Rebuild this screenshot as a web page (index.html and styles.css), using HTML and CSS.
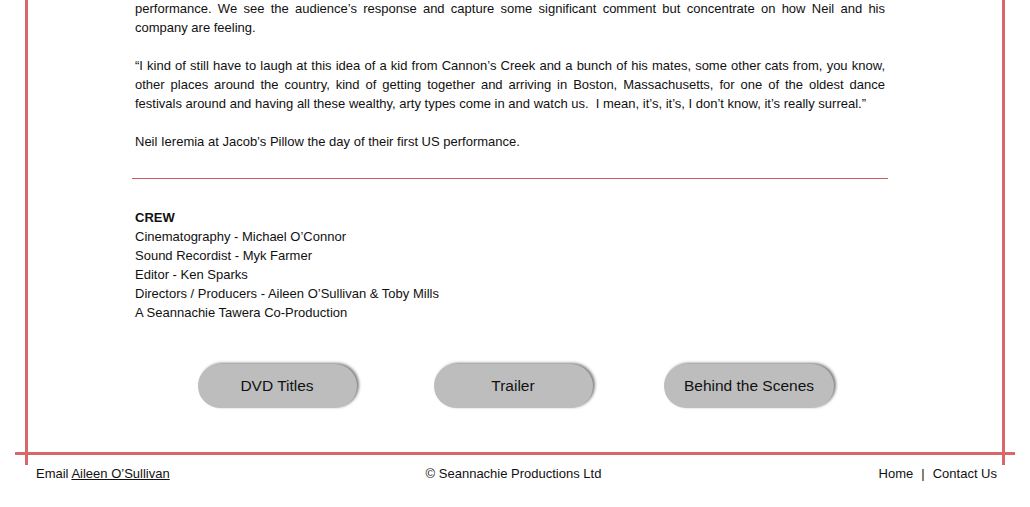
FILE: index.html
```html
<!DOCTYPE html>
<html lang="en">
<head>
  <meta charset="UTF-8">
  <meta name="viewport" content="width=device-width, initial-scale=1">
  <title>Seannachie Productions - Crew</title>
  <link rel="stylesheet" href="styles.css">
</head>
<body>
  <div class="page">
    <div class="frame">
      <div class="content">
        <p class="first">performance. We see the audience’s response and capture some significant comment but concentrate on how Neil and his company are feeling.</p>
        <p>“I kind of still have to laugh at this idea of a kid from Cannon’s Creek and a bunch of his mates, some other cats from, you know, other places around the country, kind of getting together and arriving in Boston, Massachusetts, for one of the oldest dance festivals around and having all these wealthy, arty types come in and watch us.&nbsp; I mean, it’s, it’s, I don’t know, it’s really surreal.”</p>
        <p>Neil Ieremia at Jacob’s Pillow the day of their first US performance.</p>

        <div class="divider"></div>

        <div class="crew">
          <h3>CREW</h3>
          <p>Cinematography - Michael O’Connor<br>
          Sound Recordist - Myk Farmer<br>
          Editor - Ken Sparks<br>
          Directors / Producers - Aileen O’Sullivan &amp; Toby Mills<br>
          A Seannachie Tawera Co-Production</p>
        </div>
      </div>

      <div class="buttons">
        <a href="#" class="pill">DVD Titles</a>
        <a href="#" class="pill">Trailer</a>
        <a href="#" class="pill">Behind the Scenes</a>
      </div>
    </div>

    <div class="rule"></div>
    <div class="stubs"></div>

    <div class="footer">
      <div class="footer-left">Email <a href="#">Aileen O’Sullivan</a></div>
      <div class="footer-mid">© Seannachie Productions Ltd</div>
      <div class="footer-right"><a href="#">Home</a><span class="sep">|</span><a href="#">Contact Us</a></div>
    </div>
  </div>
</body>
</html>
```

FILE: styles.css
```css
* {
  margin: 0;
  padding: 0;
  box-sizing: border-box;
}

body {
  background: #fff;
  color: #111;
  font-family: "Liberation Sans", Arial, sans-serif;
  font-size: 13px;
  line-height: 19px;
}

.page {
  width: 1000px;
  margin: 0 auto;
}

.frame {
  margin: 0 10px;
  border-left: 3px solid #d9666b;
  border-right: 3px solid #d9666b;
  padding-bottom: 44px;
}

.content {
  width: 756px;
  margin-left: 104px;
}

.content p {
  padding: 0 3px;
  margin-bottom: 19px;
  text-align: justify;
}

.content p.first {
  margin-top: -1px;
}

.divider {
  height: 1px;
  background: #cf5a60;
  margin-top: 27px;
}

.crew {
  padding: 29px 3px 0;
}

.crew h3 {
  font-size: 13px;
  font-weight: bold;
}

.crew p {
  padding: 0;
  margin: 0;
  text-align: left;
}

.buttons {
  display: grid;
  grid-template-columns: repeat(3, 236px);
  justify-content: center;
  justify-items: center;
  margin-top: 42px;
  padding-right: 4px;
}

.pill {
  display: block;
  min-width: 159px;
  height: 44px;
  padding: 0 20px;
  border-radius: 22px;
  background: #bdbdbe;
  color: #111;
  font-size: 15.5px;
  line-height: 44px;
  text-align: center;
  text-decoration: none;
  box-shadow: 2px -1px 3px rgba(0, 0, 0, 0.5);
}

.rule {
  height: 3px;
  background: #d9666b;
}

.stubs {
  height: 10px;
  margin: 0 10px;
  border-left: 3px solid #d9666b;
  border-right: 3px solid #d9666b;
}

.footer {
  display: grid;
  grid-template-columns: 1fr auto 1fr;
  padding: 0 18px 0 15px;
  line-height: 18px;
}

.footer a {
  color: #111;
}

.footer-left {
  padding-left: 6px;
}

.footer-right {
  justify-self: end;
}

.footer-right a {
  text-decoration: none;
}

.sep {
  margin: 0 8px;
}
```
